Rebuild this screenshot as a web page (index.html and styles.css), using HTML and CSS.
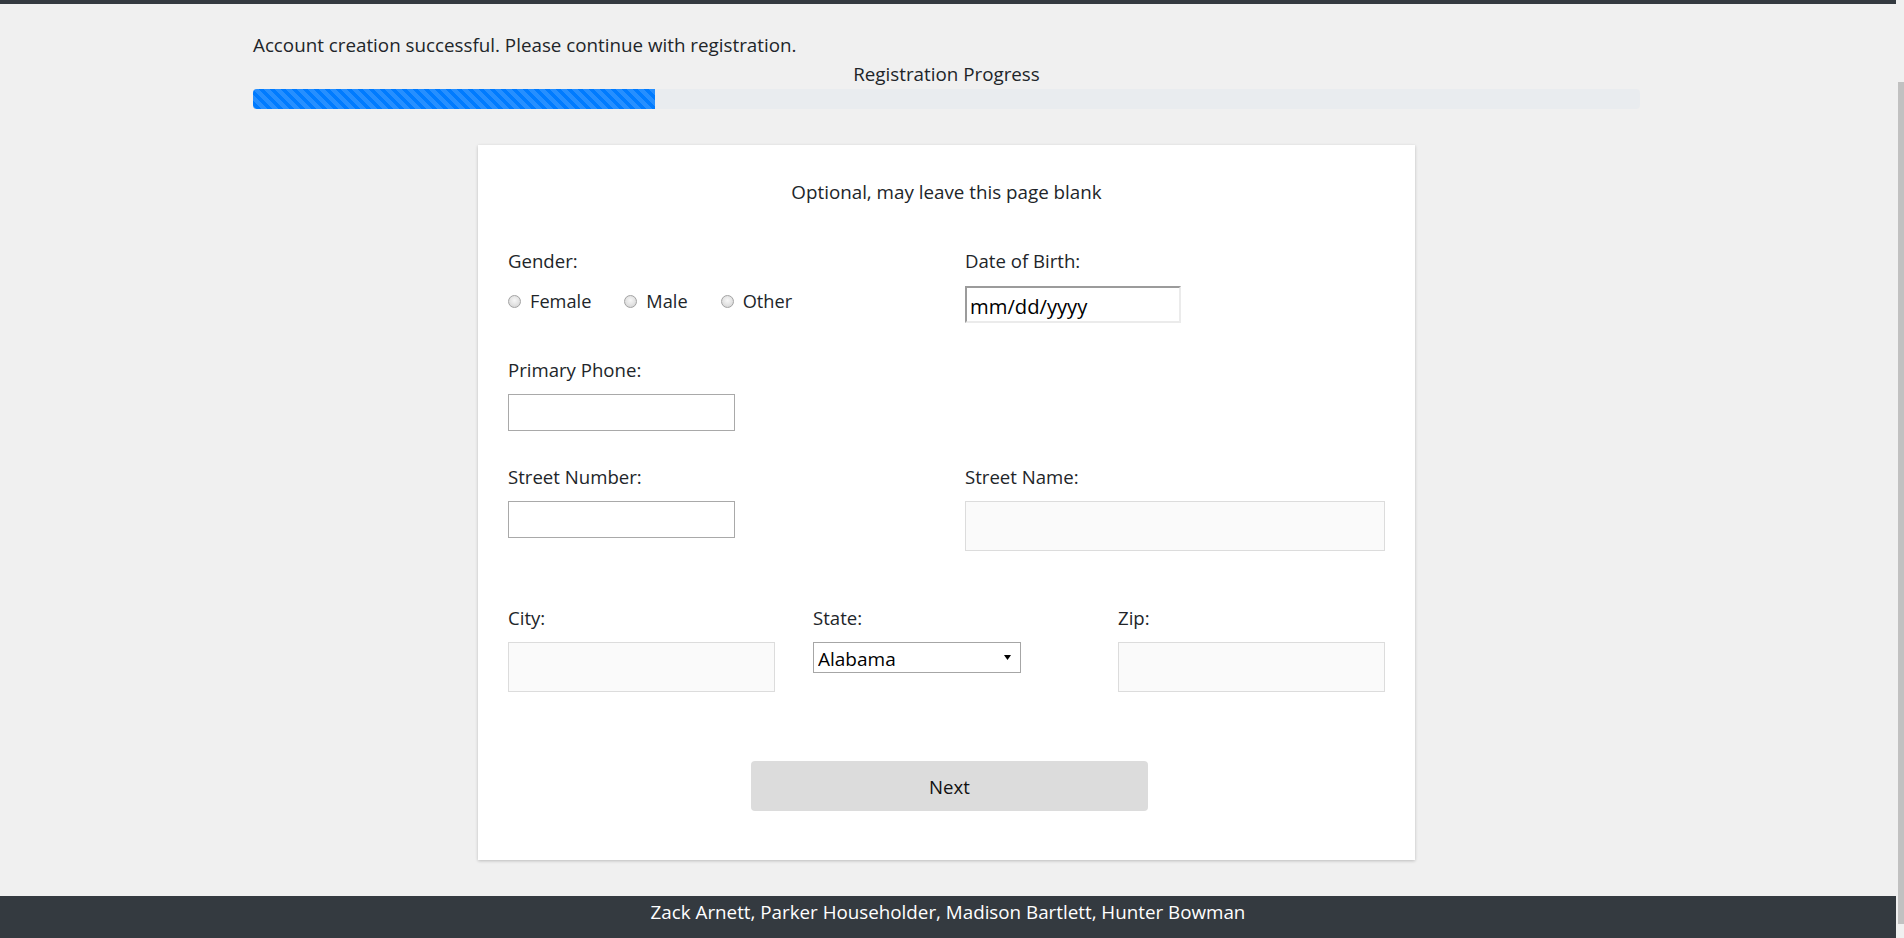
FILE: index.html
```html
<!DOCTYPE html>
<html lang="en">
<head>
<meta charset="utf-8">
<title>Registration</title>
<link rel="stylesheet" href="styles.css">
</head>
<body>
<div class="window">
  <div class="viewport">
    <div class="navbar-edge"></div>
    <main class="main">
      <div class="container">
        <p class="status">Account creation successful. Please continue with registration.</p>
        <p class="progress-label">Registration Progress</p>
        <div class="progress"><div class="progress-bar" style="width:29%"></div></div>

        <form class="card">
          <p class="card-note">Optional, may leave this page blank</p>

          <div class="row two row-1">
            <div class="field">
              <span class="label">Gender:</span>
              <div class="radios">
                <label class="radio"><input type="radio" name="gender"><span>Female</span></label>
                <label class="radio"><input type="radio" name="gender"><span>Male</span></label>
                <label class="radio"><input type="radio" name="gender"><span>Other</span></label>
              </div>
            </div>
            <div class="field">
              <label class="label" for="dob">Date of Birth:</label>
              <input id="dob" class="date-input" type="text" value="mm/dd/yyyy">
            </div>
          </div>

          <div class="row two row-2">
            <div class="field">
              <label class="label" for="phone">Primary Phone:</label>
              <input id="phone" class="text-input" type="text">
            </div>
          </div>

          <div class="row two row-3">
            <div class="field">
              <label class="label" for="snum">Street Number:</label>
              <input id="snum" class="text-input gap-10" type="text">
            </div>
            <div class="field">
              <label class="label" for="sname">Street Name:</label>
              <input id="sname" class="soft-input" type="text">
            </div>
          </div>

          <div class="row three row-4">
            <div class="field">
              <label class="label" for="city">City:</label>
              <input id="city" class="soft-input" type="text">
            </div>
            <div class="field">
              <label class="label" for="state">State:</label>
              <div class="select-wrap">
                <select id="state" class="select">
                  <option>Alabama</option>
                  <option>Alaska</option>
                  <option>Arizona</option>
                </select>
                <svg class="select-arrow" width="7" height="5" viewBox="0 0 7 5"><path d="M0 0H7L3.5 5Z" fill="#000"/></svg>
              </div>
            </div>
            <div class="field">
              <label class="label" for="zip">Zip:</label>
              <input id="zip" class="soft-input" type="text">
            </div>
          </div>

          <button type="button" class="next">Next</button>
        </form>
      </div>
    </main>
    <footer class="footer">Zack Arnett, Parker Householder, Madison Bartlett, Hunter Bowman</footer>
  </div>
  <div class="scrollbar"><div class="thumb"></div></div>
</div>
</body>
</html>
```

FILE: styles.css
```css
* { box-sizing: border-box; }

html, body {
  margin: 0;
  height: 100%;
}

body {
  font-family: "Open Sans", "Liberation Sans", sans-serif;
  font-size: 18.8px;
  color: #212529;
  background: #f0f0f0;
  overflow: hidden;
}

.window {
  display: flex;
  height: 938px;
}

.viewport {
  flex: 1;
  min-width: 0;
  display: flex;
  flex-direction: column;
}

.navbar-edge {
  flex: none;
  height: 4px;
  background: #343a40;
}

.main {
  flex: 1;
  padding-top: 27px;
}

.container {
  width: 1387px;
  margin-left: 253px;
}

.status {
  margin: 0;
  line-height: 28px;
}

.progress-label {
  margin: 1px 0 0;
  line-height: 28px;
  text-align: center;
}

.progress {
  display: flex;
  margin-top: 1px;
  height: 20px;
  background: #e9ecef;
  border-radius: 4px;
  overflow: hidden;
}

.progress-bar {
  background-color: #007bff;
  background-image: linear-gradient(45deg,
    rgba(255,255,255,.15) 25%, transparent 25%, transparent 50%,
    rgba(255,255,255,.15) 50%, rgba(255,255,255,.15) 75%, transparent 75%, transparent);
  background-size: 11px 11px;
}

.card {
  width: 937px;
  margin: 36px auto 0;
  padding: 33px 30px 49px;
  background: #fff;
  box-shadow: 0 1px 3px rgba(0,0,0,.22);
}

.card-note {
  margin: 0;
  line-height: 28px;
  text-align: center;
}

.row {
  display: flex;
  justify-content: space-between;
}

.row.two .field { width: 420px; }
.row.three .field { width: 267px; }

.row-1 { margin-top: 41px; }
.row-2 { margin-top: 33px; }
.row-3 { margin-top: 32px; }
.row-4 { margin-top: 53px; }

.label {
  display: block;
  font-size: 18.6px;
  line-height: 28px;
}

.radios {
  display: flex;
  gap: 33px;
  margin-top: 12px;
  height: 28px;
  align-items: center;
}

.radio {
  display: flex;
  align-items: center;
  gap: 9px;
  font-size: 18.2px;
  line-height: 28px;
}

.radio input {
  appearance: none;
  -webkit-appearance: none;
  margin: 0;
  width: 13px;
  height: 13px;
  border-radius: 50%;
  border: 1px solid #a3a3a3;
  background: radial-gradient(circle at 50% 40%, #f7f7f7 0, #e6e6e6 45%, #cfcfcf 100%);
}

.date-input {
  display: block;
  width: 216px;
  height: 37px;
  margin-top: 11px;
  padding: 2px 0 0 3px;
  border-top: 2px solid #9b9b9b;
  border-left: 2px solid #9b9b9b;
  border-right: 2px solid #ebebeb;
  border-bottom: 2px solid #ebebeb;
  background: #fff;
  font-family: inherit;
  font-size: 20.2px;
  color: #000;
  outline: none;
}

.text-input {
  display: block;
  width: 227px;
  height: 37px;
  margin-top: 10px;
  border: 1px solid #a9a9a9;
  background: #fff;
  font-family: inherit;
  font-size: 18px;
  outline: none;
}

.text-input.gap-10 { margin-top: 10px; }

.soft-input {
  display: block;
  width: 100%;
  height: 50px;
  margin-top: 10px;
  border: 1px solid #dcdcdc;
  background: #fafafa;
  font-family: inherit;
  font-size: 18px;
  outline: none;
}

.select-wrap {
  position: relative;
  width: 208px;
  margin-top: 10px;
}

.select {
  appearance: none;
  -webkit-appearance: none;
  display: block;
  width: 208px;
  height: 31px;
  padding: 3px 0 0 4px;
  border: 1px solid #a6a6a6;
  border-radius: 0;
  background: #fff;
  font-family: inherit;
  font-size: 19px;
  color: #000;
  outline: none;
}

.select-arrow {
  position: absolute;
  right: 10px;
  top: 13px;
  pointer-events: none;
}

.next {
  display: block;
  width: 397px;
  height: 50px;
  margin: 69px 0 0 243px;
  border: none;
  border-radius: 4px;
  background: #dcdcdc;
  font-family: inherit;
  font-size: 18.6px;
  color: #111;
}

.footer {
  flex: none;
  height: 42px;
  padding-top: 2px;
  line-height: 28px;
  background: #343a40;
  color: #fff;
  text-align: center;
}

.scrollbar {
  flex: none;
  width: 8px;
  background: #f0f0f0;
}

.thumb {
  width: 6px;
  height: 842px;
  margin: 82px 0 0 2px;
  background: #c1c1c1;
}
```
